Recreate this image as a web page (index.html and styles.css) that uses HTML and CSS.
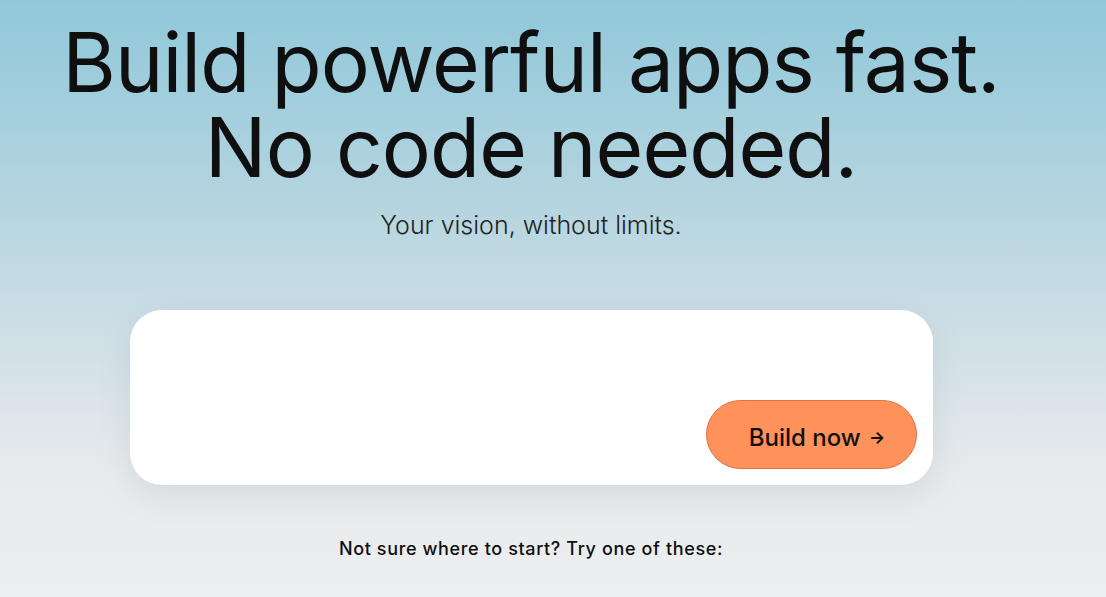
FILE: index.html
```html
<!DOCTYPE html>
<html lang="en">
<head>
    <meta charset="UTF-8">
    <meta name="viewport" content="width=device-width, initial-scale=1.0">
    <title>Build powerful apps fast</title>
    <link rel="stylesheet" href="styles.css">
</head>
<body>
<main class="hero">
    <h1 class="hero-title">Build powerful apps fast.<br>No code needed.</h1>
    <p class="hero-subtitle">Your vision, without limits.</p>

    <form class="prompt-card">
        <textarea class="prompt-input" aria-label="Describe your app"></textarea>
        <div class="prompt-actions">
            <button type="submit" class="build-button">Build now <span class="arrow">&#8594;</span></button>
        </div>
    </form>

    <p class="suggestions-label">Not sure where to start? Try one of these:</p>
</main>
</body>
</html>
```

FILE: styles.css
```css
:root {
    --text-color: #0f0f0f;
    --accent-color: #ff915a;
    --accent-border: #e0703e;
}

html, body {
    height: 100%;
}

body {
    margin: 0;
    font-family: 'Inter', 'Noto Sans', sans-serif;
    color: var(--text-color);
    background: linear-gradient(180deg, #90c8da 0%, #b6d5e0 35%, #d3e1e7 60%, #e8ebed 80%, #eceef0 100%);
    overflow: hidden;
}

.hero {
    display: flex;
    flex-direction: column;
    align-items: center;
    padding: 20px 44px 0 0;
}

.hero-title {
    margin: 0;
    font-size: 82px;
    font-weight: 400;
    line-height: 85px;
    letter-spacing: -0.012em;
    text-align: center;
}

.hero-subtitle {
    margin: 20px 0 0;
    font-size: 25px;
    font-weight: 300;
    color: #222;
}

.prompt-card {
    box-sizing: border-box;
    width: 803px;
    height: 175px;
    margin-top: 70px;
    padding: 16px;
    display: flex;
    flex-direction: column;
    background-color: #fff;
    border-radius: 32px;
    box-shadow: 0 10px 30px rgba(120, 140, 150, 0.18);
}

.prompt-input {
    flex: 1;
    border: none;
    resize: none;
    outline: none;
    background: transparent;
    font: inherit;
}

.prompt-actions {
    display: flex;
    justify-content: flex-end;
}

.build-button {
    width: 211px;
    height: 69px;
    padding: 6px 0 0 12px;
    background-color: var(--accent-color);
    border: 1px solid var(--accent-border);
    border-radius: 35px;
    color: #111;
    font-family: inherit;
    font-size: 24px;
    font-weight: 500;
    cursor: pointer;
}

.arrow {
    font-size: 17px;
    font-weight: 700;
    margin-left: 2px;
    position: relative;
    top: -3px;
}

.suggestions-label {
    margin: 53px 0 0;
    font-size: 18px;
    font-weight: 500;
    letter-spacing: 0.035em;
}
```
